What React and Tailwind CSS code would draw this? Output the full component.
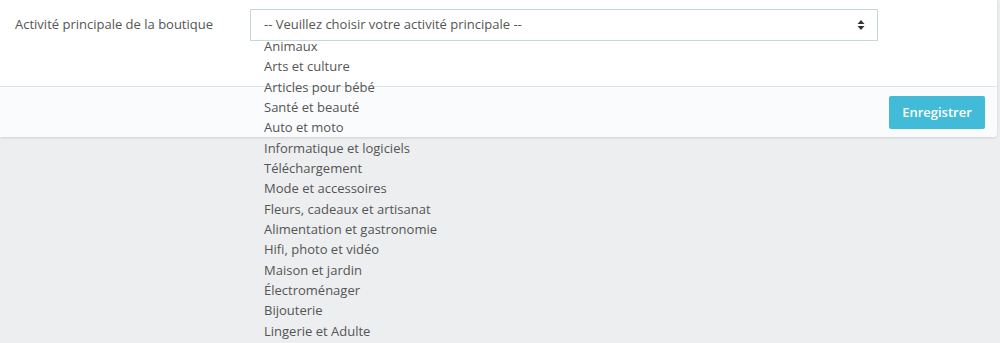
import React from "react";

const activities = [
  "Animaux",
  "Arts et culture",
  "Articles pour bébé",
  "Santé et beauté",
  "Auto et moto",
  "Informatique et logiciels",
  "Téléchargement",
  "Mode et accessoires",
  "Fleurs, cadeaux et artisanat",
  "Alimentation et gastronomie",
  "Hifi, photo et vidéo",
  "Maison et jardin",
  "Électroménager",
  "Bijouterie",
  "Lingerie et Adulte",
];

export default function App() {
  return (
    <div className="relative h-[343px] w-[1000px] overflow-hidden bg-[#eceeef] font-['Open_Sans',sans-serif] text-[13px] text-[#555]">
      {/* panel */}
      <div className="mr-[3px] rounded-br-[4px] bg-white shadow-[0_1px_3px_rgba(0,0,0,0.12)]">
        <div className="flex h-[86px] items-start pt-[9px]">
          <label className="w-[250px] pl-[15px] pt-[6px] text-[13px] text-[#555]">
            Activité principale de la boutique
          </label>

          {/* select + open list */}
          <div className="relative w-[628px]">
            <div className="flex h-[32px] items-center justify-between border border-[#c7d6db] bg-white pl-[13px] pr-[10px]">
              <span>-- Veuillez choisir votre activité principale --</span>
              <svg width="8" height="12" viewBox="0 0 8 12" className="mr-[2px]">
                <path d="M4 1 L7.5 5 H0.5 Z" fill="#333" />
                <path d="M4 11 L7.5 7 H0.5 Z" fill="#333" />
              </svg>
            </div>

            {/* dropdown options overflowing */}
            <ul className="absolute left-[14px] top-[27px] z-10 leading-[20.33px] text-[#555]">
              {activities.map((a) => (
                <li key={a} className="whitespace-nowrap">
                  {a}
                </li>
              ))}
            </ul>
          </div>
        </div>

        {/* footer */}
        <div className="flex h-[51px] items-center justify-end rounded-b-[4px] border-t border-[#dbe6e9] bg-[#fafbfc] pr-[12px]">
          <button className="mt-[1px] h-[33px] w-[96px] rounded-[2px] bg-[#41bbd8] text-[13px] font-semibold text-white">
            Enregistrer
          </button>
        </div>
      </div>
    </div>
  );
}
